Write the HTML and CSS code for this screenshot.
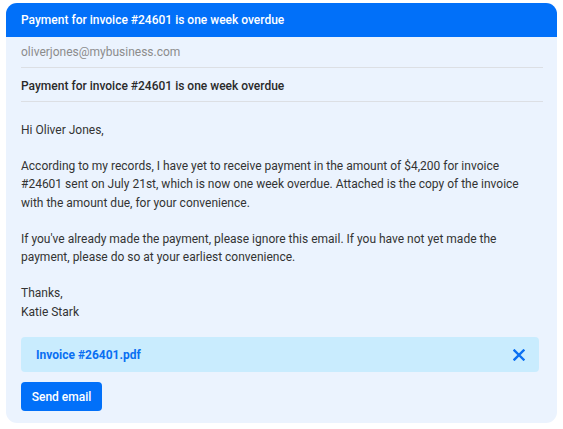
FILE: index.html
```html
<!DOCTYPE html>
<html>
<head>
<meta charset="utf-8">
<link rel="stylesheet" href="styles.css">
</head>
<body>
<div class="card">
  <div class="header">Payment for invoice #24601 is one week overdue</div>
  <div class="content">
    <div class="field email">oliverjones@mybusiness.com</div>
    <div class="field subject">Payment for invoice #24601 is one week overdue</div>
    <div class="message">
      <p>Hi Oliver Jones,</p>
      <p>According to my records, I have yet to receive payment in the amount of $4,200 for invoice #24601 sent on July 21st, which is now one week overdue. Attached is the copy of the invoice with the amount due, for your convenience.</p>
      <p>If you've already made the payment, please ignore this email. If you have not yet made the payment, please do so at your earliest convenience.</p>
      <p>Thanks,<br>Katie Stark</p>
    </div>
    <div class="attachment">
      <span class="att-name">Invoice #26401.pdf</span>
      <svg class="close" width="12" height="12" viewBox="0 0 12 12"><path d="M1.5 1.5L10.5 10.5M10.5 1.5L1.5 10.5" stroke="#0a6ff2" stroke-width="2.4" stroke-linecap="square"/></svg>
    </div>
    <button class="send">Send email</button>
  </div>
</div>
</body>
</html>
```
FILE: styles.css
```css
* { box-sizing: border-box; }
html, body { margin: 0; padding: 0; background: #fff; }
body {
  font-family: Roboto, "Noto Sans", sans-serif;
  font-size: 12px;
  color: #2b2b2b;
  padding: 3px 6px 6px 6px;
}
.card {
  width: 551px;
  height: 420px;
  background: #ebf3fe;
  border-radius: 11px;
  overflow: hidden;
}
.header {
  background: #0170f9;
  color: #fff;
  height: 34px;
  padding: 0 15px;
  display: flex;
  align-items: center;
  font-weight: 500;
}
.content {
  padding: 0 14px 0 15px;
}
.field {
  display: flex;
  align-items: center;
  border-bottom: 1px solid #dcdfe4;
}
.email { color: #8c8c8c; height: 31px; }
.subject { font-weight: 500; color: #2a2a2a; height: 34px; padding-top: 2px; }
.message {
  padding-top: 19px;
  line-height: 18.4px;
  color: #333;
}
.message p { margin: 0 0 17.6px 0; }
.message p:last-child { margin-bottom: 16px; }
.attachment {
  width: 518px;
  height: 35px;
  background: #c9ecfe;
  border-radius: 4px;
  display: flex;
  align-items: center;
  justify-content: space-between;
  padding: 0 14px 0 15px;
}
.att-name {
  color: #0a6ff2;
  font-weight: 700;
}
.close { display: block; }
.send {
  margin-top: 10px;
  height: 29px;
  width: 81px;
  background: #0170f9;
  color: #fff;
  border: none;
  border-radius: 4px;
  font-family: Roboto, "Noto Sans", sans-serif;
  font-size: 12px;
  font-weight: 500;
  padding: 0;
}
```
